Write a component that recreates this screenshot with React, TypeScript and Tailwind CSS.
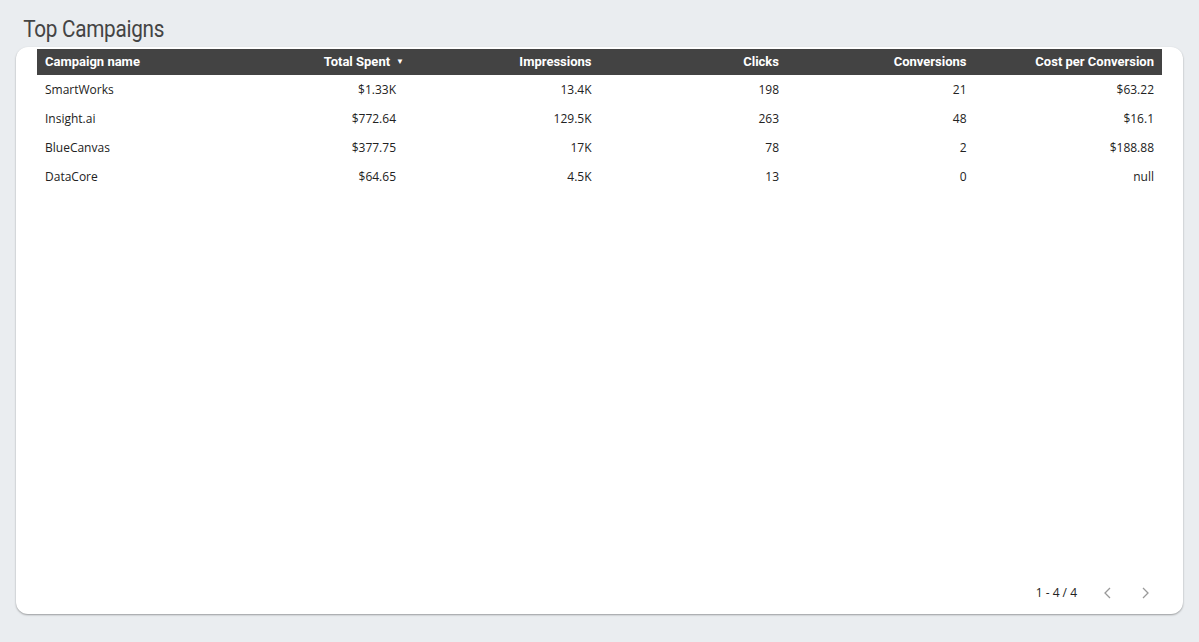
import React from "react";

const rows = [
  ["SmartWorks", "$1.33K", "13.4K", "198", "21", "$63.22"],
  ["Insight.ai", "$772.64", "129.5K", "263", "48", "$16.1"],
  ["BlueCanvas", "$377.75", "17K", "78", "2", "$188.88"],
  ["DataCore", "$64.65", "4.5K", "13", "0", "null"],
];
const heads = ["Campaign name", "Total Spent", "Impressions", "Clicks", "Conversions", "Cost per Conversion"];

export default function App() {
  return (
    <div className="w-[1199px] h-[642px] bg-[#eaedf0] pt-[15px] px-4 overflow-hidden">
      <div className="pl-[8px] text-[23px] leading-[30px] text-[#444] tracking-[-0.3px] scale-x-[0.9] origin-left" style={{ fontFamily: "Roboto, sans-serif" }}>Top Campaigns</div>
      <div className="mt-[2px] h-[567px] bg-white rounded-[12px] shadow-[0_1px_2px_rgba(0,0,0,0.35)] flex flex-col px-[21px] pt-[2px] pb-[12px]">
        <div className="grid grid-cols-6 h-[26px] bg-[#434343] text-white text-[13px] font-bold items-center" style={{ fontFamily: "Roboto, sans-serif" }}>
          {heads.map((h, i) => (
            <div key={h} className={`px-2 ${i === 0 ? "text-left" : "text-right"}`}>
              {h}
              {i === 1 && <span className="ml-[6px] text-[8px] align-[2px]">▼</span>}
            </div>
          ))}
        </div>
        {rows.map((r) => (
          <div key={r[0]} className="grid grid-cols-6 h-[29px] items-center text-[12px] text-[#222]" style={{ fontFamily: "'Open Sans', sans-serif" }}>
            {r.map((c, i) => (
              <div key={i} className={`px-2 ${i === 0 ? "text-left" : i === 1 ? "text-right pr-[16px]" : "text-right"}`}>{c}</div>
            ))}
          </div>
        ))}
        <div className="flex-1" />
        <div className="flex items-center justify-end text-[12px] text-[#222] pr-[10px]" style={{ fontFamily: "'Open Sans', sans-serif" }}>
          <span>1 - 4 / 4</span>
          <svg className="ml-[24px]" width="14" height="14" viewBox="0 0 14 14"><path d="M9 2 L4 7 L9 12" fill="none" stroke="#999" strokeWidth="1.3" /></svg>
          <svg className="ml-[23px]" width="14" height="14" viewBox="0 0 14 14"><path d="M5 2 L10 7 L5 12" fill="none" stroke="#999" strokeWidth="1.3" /></svg>
        </div>
      </div>
    </div>
  );
}
